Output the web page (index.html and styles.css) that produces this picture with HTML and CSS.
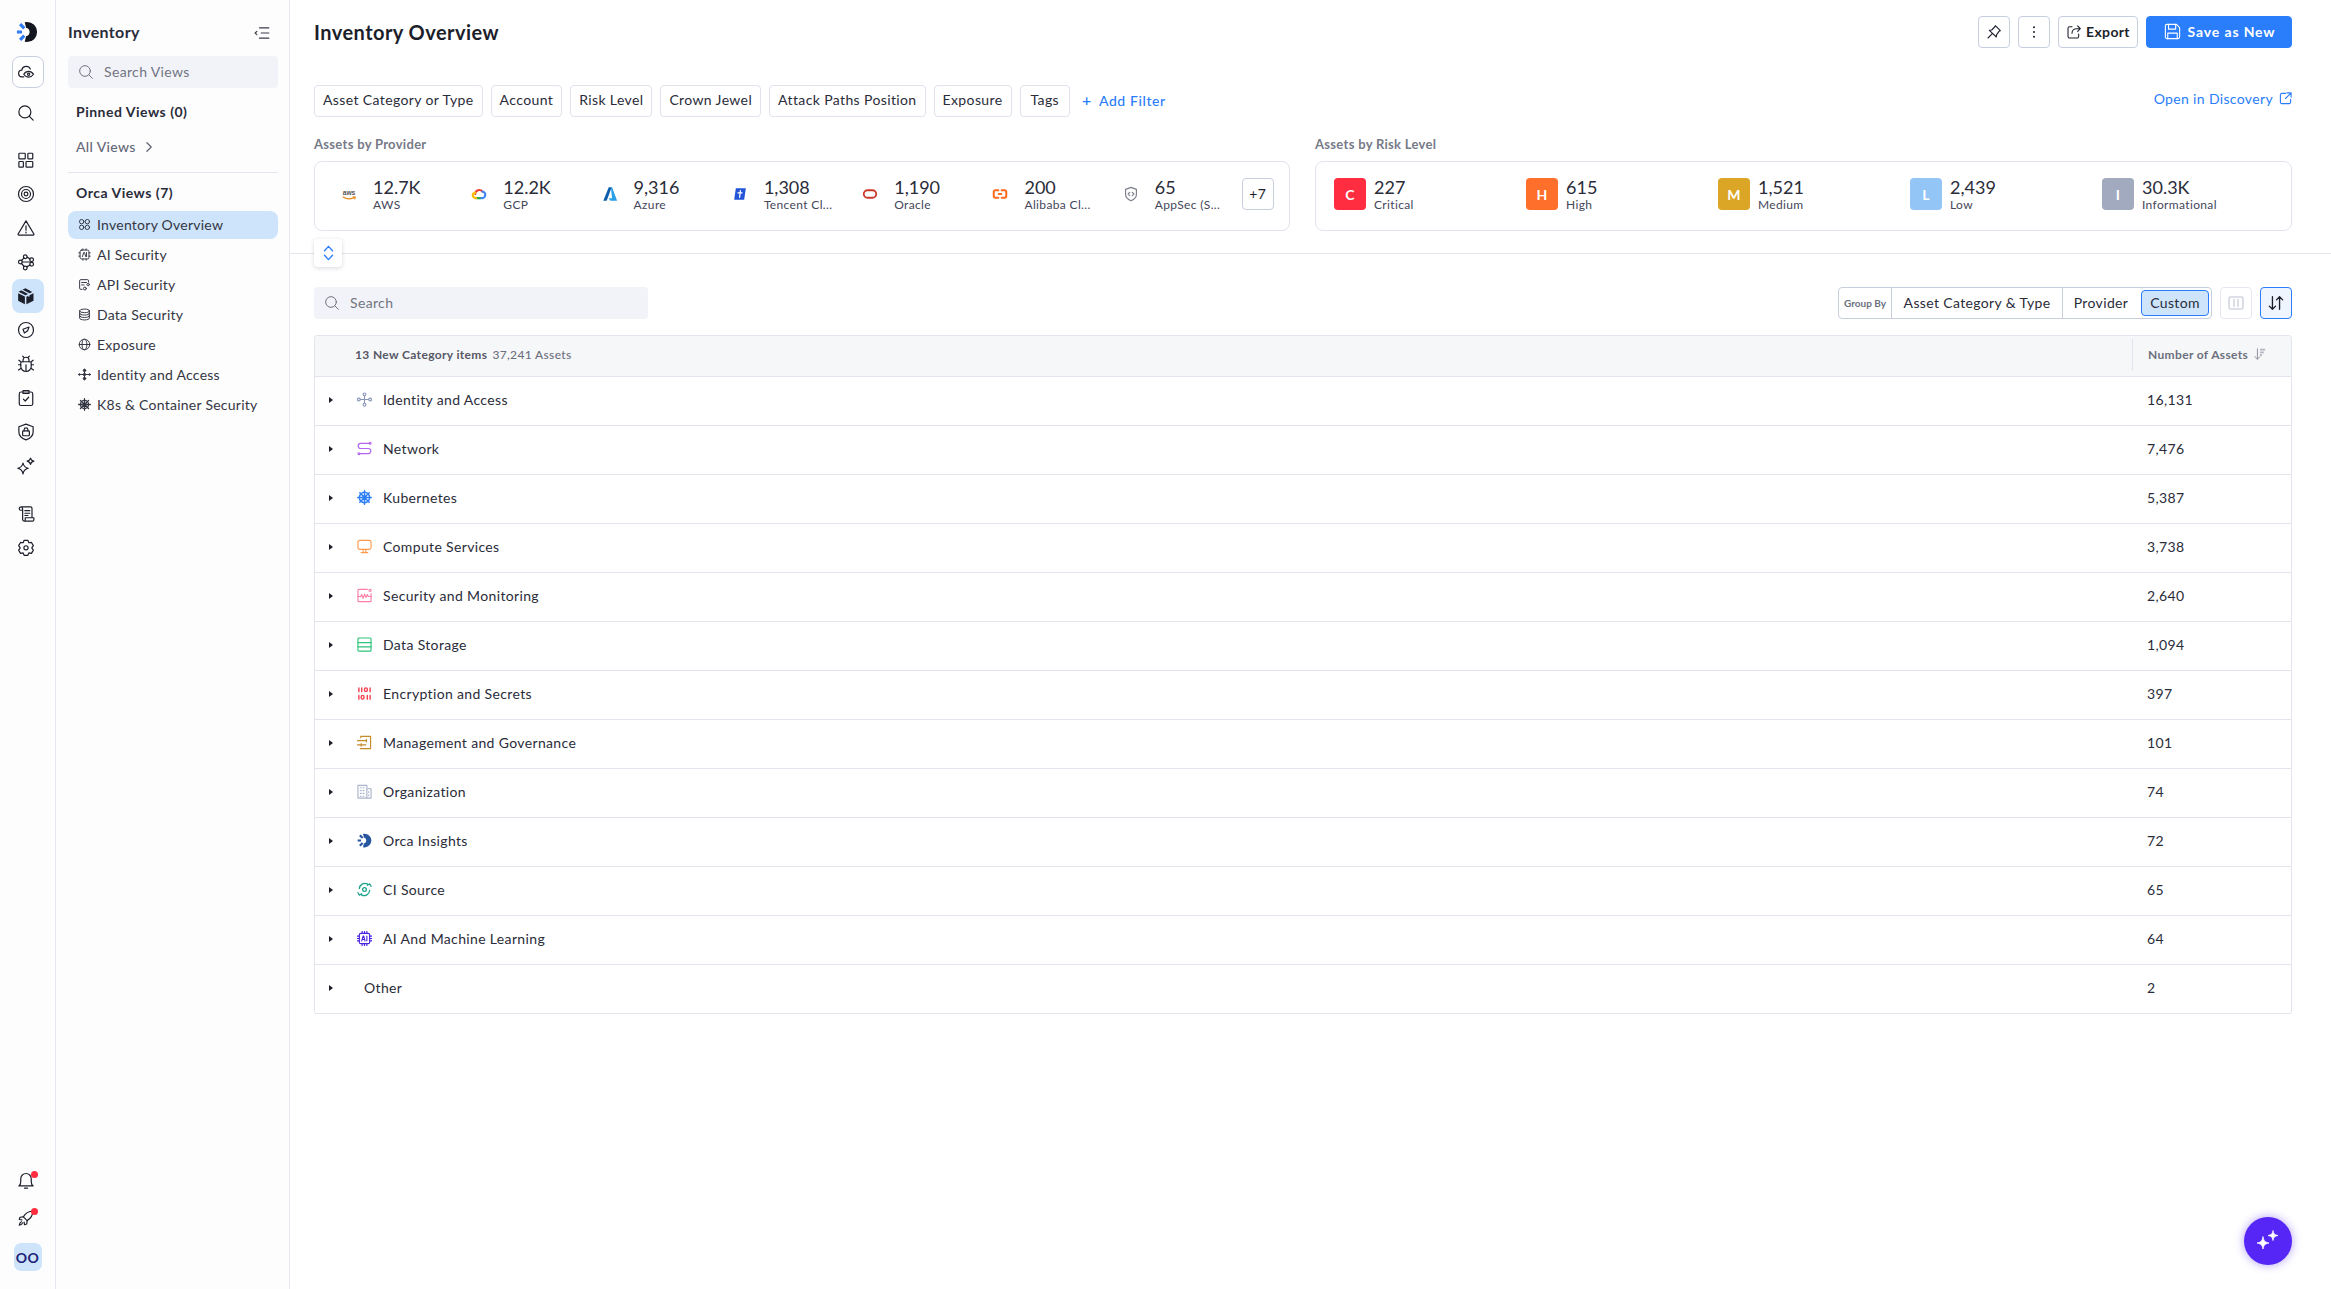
FILE: index.html
```html
<!DOCTYPE html>
<html lang="en">
<head>
    <meta charset="UTF-8">
    <meta name="viewport" content="width=device-width, initial-scale=1.0">
    <title>Inventory Overview</title>
    <link rel="stylesheet" href="styles.css">
</head>
<body>
    <!-- icon rail -->
    <nav class="rail">
        <svg class="logo" viewBox="0 0 24 24"><path class="logo-dark" d="M12 1a11 11 0 0 1 0 22l-2.500-.3 1.500-6a4.800 4.800 0 0 0 0-9.400L9.500 1.300z"/><path class="logo-blue" d="M4.500 3.500 9 8M1 12h5.500M4.500 20.500 9 16"/></svg>
        <a class="rail-btn rail-btn-outline"><svg class="ri" viewBox="0 0 24 24"><path d="M9 18.500H7a4.500 4.500 0 0 1-.6-9 6 6 0 0 1 11.400-1.500"/><path d="M9 15s2.500-3.800 6.500-3.800S22 15 22 15s-2.500 3.800-6.500 3.800S9 15 9 15z"/><circle cx="15.500" cy="15" r="1.500"/></svg></a>
        <a class="rail-btn rail-search"><svg class="ri" viewBox="0 0 24 24"><circle cx="10.500" cy="10.500" r="8"/><path d="m16.500 16.500 5 5"/></svg></a>

        <div class="rail-group">
            <a class="rail-btn"><svg class="ri" viewBox="0 0 24 24"><rect x="2.500" y="3" width="8.500" height="7.500" rx="1"/><rect x="14.500" y="3" width="6.500" height="7.500" rx="1"/><rect x="2.500" y="14" width="6" height="7.500" rx="1"/><rect x="12" y="14" width="9" height="7.500" rx="1"/></svg></a>
            <a class="rail-btn"><svg class="ri" viewBox="0 0 24 24"><circle cx="12" cy="12" r="10"/><circle cx="12" cy="12" r="6"/><circle cx="12" cy="12" r="2.500"/></svg></a>
            <a class="rail-btn"><svg class="ri" viewBox="0 0 24 24"><path d="M12 2.500 22.500 20a1 1 0 0 1-.9 1.500H2.400a1 1 0 0 1-.9-1.500z"/><path d="M12 9v6M12 17.500v1"/></svg></a>
            <a class="rail-btn"><svg class="ri" viewBox="0 0 24 24"><circle cx="4.500" cy="12" r="2.500"/><circle cx="11" cy="5" r="2.500"/><circle cx="19.500" cy="9" r="2.500"/><circle cx="19.500" cy="15" r="2.500"/><circle cx="11" cy="20" r="2.500"/><path d="M7 12h10M13.500 5.500 17.500 8M13 18.500l4.500-2.500M6 10l3.500-3.500M6 14l3.500 4"/></svg></a>
            <a class="rail-btn rail-btn-active"><svg class="ri" viewBox="0 0 24 24"><path class="solid" d="M11.300 1.700 2 6.300l9.300 4.700 9-4.500zM1.500 8.200l9 4.600V23l-9-4.700zM22 8.200l-9.500 4.700V23l9.500-4.800z"/><path class="cut" d="m6.500 4 9.300 4.800v3.400"/></svg></a>
            <a class="rail-btn"><svg class="ri" viewBox="0 0 24 24"><circle cx="12" cy="12" r="10"/><path d="m16 8-1.800 5-4.300 3L8 11z"/></svg></a>
            <a class="rail-btn"><svg class="ri" viewBox="0 0 24 24"><path d="M7 9h10a2 2 0 0 1 2 2v4a7 7 0 0 1-14 0v-4a2 2 0 0 1 2-2z"/><path d="M8 9V7a4 4 0 0 1 8 0v2M12 13v9M5 13H2M19 13h3M5 18l-3 2M19 18l3 2M5 9 2.500 7M19 9l2.500-2M9 3 7.500 1.500M15 3l1.500-1.500"/></svg></a>
            <a class="rail-btn"><svg class="ri" viewBox="0 0 24 24"><rect x="3" y="4" width="18" height="18" rx="2.500"/><path d="M8 2h8v4H8zM8.500 13.500l2.500 2.500 4.500-5"/></svg></a>
            <a class="rail-btn"><svg class="ri" viewBox="0 0 24 24"><path d="M12 1.500 21.500 5v7c0 5-4 8.500-9.500 10.500C6.500 20.500 2.500 17 2.500 12V5z"/><rect x="7.500" y="10.500" width="9" height="6.500" rx="1"/><path d="M9.500 10.500V9a2.500 2.500 0 0 1 5 0v1.500"/></svg></a>
            <a class="rail-btn"><svg class="ri" viewBox="0 0 24 24"><path d="M8 8c.8 4 2.500 6 7 7-4.500 1-6.200 3-7 7.500C7.200 18 5.500 16 1 15c4.500-1 6.200-3 7-7zM18 1.500c.5 2.500 1.500 3.500 4.500 4-3 .6-4 1.600-4.500 4.500-.5-2.900-1.500-3.900-4.500-4.500 3-.5 4-1.500 4.500-4z"/></svg></a>
        </div>

        <div class="rail-group rail-group-low">
            <a class="rail-btn"><svg class="ri" viewBox="0 0 24 24"><path d="M6 2.500h12a2 2 0 0 1 2 2V17M6 2.500a2.500 2.500 0 0 0-3 2.500c0 1.300.8 2 2 2h1.500M6 2.500c1 .5 1.500 1.500 1.500 3V19a2.500 2.500 0 0 0 2.500 2.500h10.500a2 2 0 0 0 2-2V17H11v2a2.500 2.500 0 0 1-1 2.500"/><path d="M10.500 7.500h6.500M10.500 11h6.500M10.500 14h4"/></svg></a>
            <a class="rail-btn"><svg class="ri" viewBox="0 0 24 24"><path d="m9.500 1.800 5 0 1.300 3.200 3.500-.4 2.500 4.300-2.100 2.900 2.100 3-2.500 4.300-3.500-.5-1.300 3.100h-5l-1.300-3.100-3.500.5-2.500-4.300 2.100-3-2.100-2.900 2.500-4.300 3.500.4z"/><circle cx="12" cy="11.800" r="2.800"/></svg></a>
        </div>

        <div class="rail-bottom">
            <a class="rail-btn"><svg class="ri" viewBox="0 0 24 24"><path d="M2.500 18.500c1.500-1 2.500-3 2.500-6V9a7 7 0 0 1 14 0v3.500c0 3 1 5 2.500 6z"/><path d="M10 21.500h4"/></svg><i class="dot"></i></a>
            <a class="rail-btn"><svg class="ri" viewBox="0 0 24 24"><path d="M21 3c-6 0-10 3-12.500 7.500l5 5C18 13 21 9 21 3z"/><path d="M8.500 10.500 4 11l-1 3 3.500.5M13.500 15.500 13 20l-3 1-.5-3.500M6 17c-1.500.5-2.500 2-3 4.500 2.500-.5 4-1.500 4.500-3"/></svg><i class="dot"></i></a>
            <a class="avatar">OO</a>
        </div>
    </nav>

    <!-- views panel -->
    <aside class="panel">
        <div class="panel-head">
            <span>Inventory</span>
            <svg class="collapse" viewBox="0 0 18 14"><path d="M6 1h11M8 7h9M6 13h11M3 5 1 7l2 2"/></svg>
        </div>
        <div class="search-box panel-search">
            <svg viewBox="0 0 24 24"><circle cx="10.500" cy="10.500" r="8"/><path d="m16.500 16.500 5 5"/></svg>
            <span>Search Views</span>
        </div>
        <h3 class="panel-title pinned">Pinned Views (0)</h3>
        <a class="all-views">All Views
            <svg viewBox="0 0 10 14"><path d="m2 2 5 5-5 5"/></svg>
        </a>
        <h3 class="panel-title orca">Orca Views (7)</h3>
        <ul class="view-list">
            <li class="view-active"><svg viewBox="0 0 16 16"><circle cx="4.500" cy="4.500" r="2.700"/><circle cx="11.500" cy="4.500" r="2.700"/><circle cx="4.500" cy="11.500" r="2.700"/><circle cx="11.500" cy="11.500" r="2.700"/></svg>Inventory Overview</li>
            <li><svg viewBox="0 0 16 16"><rect x="2.500" y="2.500" width="11" height="11" rx="2"/><path d="M1 6h1.500M1 10h1.500M13.500 6H15M13.500 10H15M6 1v1.500M10 1v1.500M6 13.500V15M10 13.500V15M5.500 10.500 7 5.500h1l1.500 5M10.500 5.500v5"/></svg>AI Security</li>
            <li><svg viewBox="0 0 16 16"><path d="M5 14H3.500a1.500 1.500 0 0 1-1.500-1.500v-9A1.500 1.500 0 0 1 3.500 2h8A1.500 1.500 0 0 1 13 3.500V5"/><path d="M4.500 5.500h6M4.500 8.500h3"/><circle cx="12.500" cy="8" r="1.500"/><circle cx="8.500" cy="13" r="1.800"/></svg>API Security</li>
            <li><svg viewBox="0 0 16 16"><ellipse cx="8" cy="3.500" rx="6" ry="2.200"/><path d="M2 3.500v9c0 1.200 2.700 2.200 6 2.200s6-1 6-2.200v-9M2 6.500c0 1.200 2.700 2.200 6 2.200s6-1 6-2.200M2 9.500c0 1.200 2.700 2.200 6 2.200s6-1 6-2.200"/></svg>Data Security</li>
            <li><svg viewBox="0 0 16 16"><circle cx="8" cy="8" r="6.500"/><ellipse cx="8" cy="8" rx="3" ry="6.500"/><path d="M1.500 8h13"/></svg>Exposure</li>
            <li><svg viewBox="0 0 16 16"><path d="M8 1.500v13M1 8h14"/><circle class="solid" cx="8" cy="3" r="1.500"/><circle class="solid" cx="8" cy="13" r="1.500"/><circle class="solid" cx="8" cy="8" r="1.500"/><circle class="solid" cx="1.800" cy="8" r="1"/><circle class="solid" cx="14.200" cy="8" r="1"/></svg>Identity and Access</li>
            <li><svg class="wheel" viewBox="0 0 16 16"><circle cx="8" cy="8" r="5"/><circle class="solid" cx="8" cy="8" r="1.500"/><path d="M8 .8v14.400M.8 8h14.400M3 3l10 10M13 3 3 13"/></svg>K8s &amp; Container Security</li>
        </ul>
    </aside>

    <main class="main">
        <section class="top">
            <header class="page-head">
                <h1>Inventory Overview</h1>
                <div class="head-actions">
                    <button class="btn btn-square"><svg viewBox="0 0 24 24"><path d="M14 2.500 21.500 10l-2 1-3.500 5-.5 3.500L5 9.500l3.500-.5 4.500-4.500zM9.500 14.500 3 21"/></svg></button>
                    <button class="btn btn-square"><svg viewBox="0 0 24 24"><circle class="solid" cx="12" cy="5" r="1.500"/><circle class="solid" cx="12" cy="12" r="1.500"/><circle class="solid" cx="12" cy="19" r="1.500"/></svg></button>
                    <button class="btn btn-export"><svg viewBox="0 0 24 24"><path d="M9 4H5.500A2.500 2.500 0 0 0 3 6.500v12A2.500 2.500 0 0 0 5.500 21h11a2.500 2.500 0 0 0 2.500-2.500V15"/><path d="M9 14c0-4 3-7 7-7h5M17.500 3 21.500 7l-4 4"/></svg>Export</button>
                    <button class="btn btn-save"><svg viewBox="0 0 24 24"><path d="M3 5a2 2 0 0 1 2-2h12l4 4v12a2 2 0 0 1-2 2H5a2 2 0 0 1-2-2z"/><path d="M7 3v6h9V3M6 21v-7h12v7"/></svg>Save as New</button>
                </div>
            </header>

            <div class="filters">
                <button class="chip">Asset Category or Type</button>
                <button class="chip">Account</button>
                <button class="chip">Risk Level</button>
                <button class="chip">Crown Jewel</button>
                <button class="chip">Attack Paths Position</button>
                <button class="chip">Exposure</button>
                <button class="chip chip-tags">Tags</button>
                <a class="add-filter"><span class="plus">+</span>Add Filter</a>
                <a class="discovery">Open in Discovery
                    <svg viewBox="0 0 14 14"><path d="M7 1.500H3A1.500 1.500 0 0 0 1.500 3v8A1.500 1.500 0 0 0 3 12.500h8a1.500 1.500 0 0 0 1.500-1.500V8M8.500 1h4.500v4.500M13 1 7 7"/></svg>
                </a>
            </div>

            <div class="summary">
                <div>
                    <div class="summary-label">Assets by Provider</div>
                    <div class="card card-provider">
                        <div class="stat">
                            <svg class="stat-icon" viewBox="0 0 24 24"><path fill="none" stroke="#e8891c" stroke-width="1.400" stroke-linecap="round" d="M5 15.500c4 3 10 3 14 .5M17 15.500l2.500.2-.5 2.300"/><text x="12" y="13" text-anchor="middle" class="aws-mark">aws</text></svg>
                            <div class="stat-text"><b>12.7K</b><span>AWS</span></div>
                        </div>
                        <div class="stat">
                            <svg class="stat-icon" viewBox="0 0 24 24"><path fill="none" stroke="#ea4335" stroke-width="2.600" d="M7.500 12a4.800 4.800 0 0 1 8.500-3"/><path fill="none" stroke="#4285f4" stroke-width="2.600" d="M16 9c2 .3 3.500 2 3.500 4S18 17 16 17h-3"/><path fill="none" stroke="#34a853" stroke-width="2.600" d="M13 17H8.500"/><path fill="none" stroke="#fbbc05" stroke-width="2.600" d="M8.500 17c-2 0-4-1.500-4-3.500s1.500-2.800 3-3"/></svg>
                            <div class="stat-text"><b>12.2K</b><span>GCP</span></div>
                        </div>
                        <div class="stat">
                            <svg class="stat-icon" viewBox="0 0 24 24"><path fill="#0b5cab" d="M10.500 4H14L8 20H4z"/><path fill="#2aa0e6" d="M13 4h1.500L20.500 20h-8l-2-3h4z"/></svg>
                            <div class="stat-text"><b>9,316</b><span>Azure</span></div>
                        </div>
                        <div class="stat">
                            <svg class="stat-icon" viewBox="0 0 24 24"><path fill="#2254d8" d="M7 5h12l-2 14H5z"/><path fill="none" stroke="#fff" stroke-width="1.500" d="M12.500 8 11.500 16M9.500 10.500h5"/></svg>
                            <div class="stat-text"><b>1,308</b><span>Tencent Cl...</span></div>
                        </div>
                        <div class="stat">
                            <svg class="stat-icon" viewBox="0 0 24 24"><rect x="4.500" y="7.500" width="15" height="9" rx="4.500" fill="none" stroke="#c9392b" stroke-width="2.200"/></svg>
                            <div class="stat-text"><b>1,190</b><span>Oracle</span></div>
                        </div>
                        <div class="stat">
                            <svg class="stat-icon" viewBox="0 0 24 24"><path fill="none" stroke="#ff6a1f" stroke-width="2.400" d="M10 7.500H6.500a2 2 0 0 0-2 2v5a2 2 0 0 0 2 2H10M14 7.500h3.500a2 2 0 0 1 2 2v5a2 2 0 0 1-2 2H14M10.500 12h3"/></svg>
                            <div class="stat-text"><b>200</b><span>Alibaba Cl...</span></div>
                        </div>
                        <div class="stat">
                            <svg class="stat-icon" viewBox="0 0 24 24"><path fill="none" stroke="#7c7f8c" stroke-width="1.400" d="M12 4 18.500 6.500v6c0 3.500-3 6-6.500 7.500-3.500-1.500-6.500-4-6.500-7.500v-6zM10.500 10 8.500 12l2 2M13.500 10l2 2-2 2"/></svg>
                            <div class="stat-text"><b>65</b><span>AppSec (S...</span></div>
                        </div>
                        <button class="btn btn-more">+7</button>
                    </div>
                </div>
                <div>
                    <div class="summary-label">Assets by Risk Level</div>
                    <div class="card card-risk">
                        <div class="stat"><i class="badge badge-c">C</i><div class="stat-text"><b>227</b><span>Critical</span></div></div>
                        <div class="stat"><i class="badge badge-h">H</i><div class="stat-text"><b>615</b><span>High</span></div></div>
                        <div class="stat"><i class="badge badge-m">M</i><div class="stat-text"><b>1,521</b><span>Medium</span></div></div>
                        <div class="stat"><i class="badge badge-l">L</i><div class="stat-text"><b>2,439</b><span>Low</span></div></div>
                        <div class="stat"><i class="badge badge-i">I</i><div class="stat-text"><b>30.3K</b><span>Informational</span></div></div>
                    </div>
                </div>
            </div>

            <button class="toggle"><svg viewBox="0 0 12 18"><path d="m1.500 6.500 4.500-5 4.500 5M1.500 11.500l4.500 5 4.500-5"/></svg></button>
        </section>

        <div class="toolbar">
            <div class="search-box table-search">
                <svg viewBox="0 0 24 24"><circle cx="10.500" cy="10.500" r="8"/><path d="m16.500 16.500 5 5"/></svg>
                <span>Search</span>
            </div>
            <div class="group-by">
                <span class="group-label">Group By</span>
                <span class="group-opt group-first">Asset Category &amp; Type</span>
                <span class="group-opt">Provider</span>
                <span class="group-opt group-on">Custom</span>
            </div>
            <button class="btn btn-columns"><svg viewBox="0 0 16 14"><rect x="1" y="1" width="14" height="12" rx="1.500"/><path d="M6 3.500v7M10 3.500v7"/></svg></button>
            <button class="btn btn-sort"><svg viewBox="0 0 20 18"><path d="M6 2v14M2.500 12.500 6 16l3.500-3.500M14 16V2M10.500 5.500 14 2l3.500 3.500"/></svg></button>
        </div>

        <div class="table">
            <div class="row row-head">
                <div class="cell-name"><b>13 New Category items</b> 37,241 Assets</div>
                <div class="cell-count">Number of Assets
                    <svg viewBox="0 0 14 14"><path d="M4 1v12M1 10l3 3 3-3"/><path class="thick" d="M7 2h6M7 5h4.500M7 8h2.500"/></svg>
                </div>
            </div>
            <div class="row">
                <div class="cell-name"><i class="caret"></i><svg class="row-icon c-iam" viewBox="0 0 16 16"><circle cx="8" cy="2.500" r="1.500"/><circle cx="8" cy="13.500" r="1.500"/><circle cx="2" cy="8" r="1.500"/><circle cx="14" cy="8" r="1.500"/><path d="M8 4v8M3.500 8h9"/></svg>Identity and Access</div>
                <div class="cell-count">16,131</div>
            </div>
            <div class="row">
                <div class="cell-name"><i class="caret"></i><svg class="row-icon c-net" viewBox="0 0 16 16"><path d="M13 2.500H4a2.750 2.750 0 0 0 0 5.500h8a2.750 2.750 0 0 1 0 5.500H3M5 8h6"/><circle cx="14" cy="2.500" r="1"/><circle cx="2" cy="13.500" r="1"/></svg>Network</div>
                <div class="cell-count">7,476</div>
            </div>
            <div class="row">
                <div class="cell-name"><i class="caret"></i><svg class="row-icon c-k8s" viewBox="0 0 16 16"><circle cx="8" cy="8" r="5.500"/><circle cx="8" cy="8" r="1.500"/><path d="M8 .8v14.400M.8 8h14.400M3 3l10 10M13 3 3 13"/></svg>Kubernetes</div>
                <div class="cell-count">5,387</div>
            </div>
            <div class="row">
                <div class="cell-name"><i class="caret"></i><svg class="row-icon c-compute" viewBox="0 0 16 16"><rect x="1" y="1.500" width="14" height="9.500" rx="2"/><path d="M6.500 11v3M9.500 11v3M4.500 14.500h7"/></svg>Compute Services</div>
                <div class="cell-count">3,738</div>
            </div>
            <div class="row">
                <div class="cell-name"><i class="caret"></i><svg class="row-icon c-sec" viewBox="0 0 16 16"><path d="M11 1.500H2a1 1 0 0 0-1 1v11a1 1 0 0 0 1 1h12a1 1 0 0 0 1-1V6"/><path d="M1 9h3l1-2 1.500 4L8 6.500 9.500 10l1.500-3 1 2h3"/><circle cx="14" cy="2.500" r="1.200"/></svg>Security and Monitoring</div>
                <div class="cell-count">2,640</div>
            </div>
            <div class="row">
                <div class="cell-name"><i class="caret"></i><svg class="row-icon c-data" viewBox="0 0 16 16"><rect x="1" y="1" width="14" height="14" rx="1"/><path d="M1 6h14M1 10.500h14"/></svg>Data Storage</div>
                <div class="cell-count">1,094</div>
            </div>
            <div class="row">
                <div class="cell-name"><i class="caret"></i><svg class="row-icon c-enc" viewBox="0 0 16 16"><path d="M2 2v4M5 2v4M14 2v4M2 14v-4M11 10v4M14 10v4"/><rect x="8" y="2" width="3" height="4" rx="1.500"/><rect x="4.500" y="10" width="3" height="4" rx="1.500"/></svg>Encryption and Secrets</div>
                <div class="cell-count">397</div>
            </div>
            <div class="row">
                <div class="cell-name"><i class="caret"></i><svg class="row-icon c-mgmt" viewBox="0 0 16 16"><path d="M4 3V1.500h10.500v13H3.500M.5 6h9M.5 10.500h9M10 4.500V7.500M4.500 9v3"/></svg>Management and Governance</div>
                <div class="cell-count">101</div>
            </div>
            <div class="row">
                <div class="cell-name"><i class="caret"></i><svg class="row-icon c-org" viewBox="0 0 16 16"><path d="M1 15V1.500h9.500V15zM10.500 5H15v10h-4.500M3.500 4h1M6.500 4h1M3.500 7h1M6.500 7h1M3.500 10h1M6.500 10h1M3.500 13h1M6.500 13h1M12.500 8v1M12.500 11.500v1"/></svg>Organization</div>
                <div class="cell-count">74</div>
            </div>
            <div class="row">
                <div class="cell-name"><i class="caret"></i><svg class="row-icon c-orca" viewBox="0 0 24 24"><path d="M12 1a11 11 0 0 1 0 22l-2.500-.3 1.500-6a4.800 4.800 0 0 0 0-9.400L9.500 1.300z"/><path class="orca-dash" d="M4.500 3.500 9 8M1 12h5.500M4.500 20.500 9 16"/></svg>Orca Insights</div>
                <div class="cell-count">72</div>
            </div>
            <div class="row">
                <div class="cell-name"><i class="caret"></i><svg class="row-icon c-ci" viewBox="0 0 16 16"><path d="M2.500 7A6 6 0 0 1 11 2M13.500 9A6 6 0 0 1 5 14M1 11.500l1.500 2.500 2.500-1.500M15 4.500 13.500 2 11 3.500"/><circle cx="8" cy="8" r="2"/></svg>CI Source</div>
                <div class="cell-count">65</div>
            </div>
            <div class="row">
                <div class="cell-name"><i class="caret"></i><svg class="row-icon c-ai" viewBox="0 0 16 16"><rect x="2.500" y="2.500" width="11" height="11" rx="1.500"/><path d="M0 5.500h2.500M0 8h2.500M0 10.500h2.500M13.500 5.500H16M13.500 8H16M13.500 10.500H16M5.500 0v2.500M8 0v2.500M10.500 0v2.500M5.500 13.500V16M8 13.500V16M10.500 13.500V16M5 10.500 6.500 5.500h.7l1.300 5M5.600 9h2.400M10.500 5.500v5"/></svg>AI And Machine Learning</div>
                <div class="cell-count">64</div>
            </div>
            <div class="row">
                <div class="cell-name"><i class="caret"></i><span class="other">Other</span></div>
                <div class="cell-count">2</div>
            </div>
        </div>
    </main>

    <button class="assistant"><svg viewBox="0 0 32 32"><path d="M11 12c.8 4 2 5.200 6 6-4 .8-5.200 2-6 6-.8-4-2-5.200-6-6 4-.8 5.200-2 6-6z"/><path d="M21 6c.6 3 1.500 3.900 5 4.500-3.500.6-4.400 1.500-5 5-.6-3.500-1.500-4.400-5-5 3.500-.6 4.400-1.500 5-4.500z"/></svg></button>
</body>
</html>
```

FILE: styles.css
```css
* {
    box-sizing: border-box;
}

body {
    margin: 0;
    height: 100vh;
    overflow: hidden;
    display: flex;
    font-family: "Lato", "Noto Sans", sans-serif;
    font-size: 14px;
    letter-spacing: 0.35px;
    color: #2a2c39;
    background: #fff;
}

svg {
    fill: none;
    stroke: currentColor;
    stroke-linecap: round;
    stroke-linejoin: round;
    flex: none;
}

button {
    font-family: inherit;
    letter-spacing: inherit;
    cursor: pointer;
}

/* icon rail */
.rail {
    width: 56px;
    flex: none;
    display: flex;
    flex-direction: column;
    align-items: center;
    padding-top: 21px;
    border-right: 1px solid #e6e7ef;
    background: #fdfdfe;
}

.logo {
    width: 22px;
    height: 22px;
    margin: 0 2px 13px 0;
}

.logo-dark {
    fill: #14161f;
    stroke: none;
}

.logo-blue {
    stroke: #2e7bf6;
    stroke-width: 3.4;
    stroke-linecap: butt;
}

.rail-btn {
    position: relative;
    width: 32px;
    height: 34px;
    padding-right: 4px;
    display: flex;
    align-items: center;
    justify-content: center;
    color: #1d1f2b;
    border-radius: 8px;
}

.ri {
    width: 18px;
    height: 18px;
    stroke-width: 1.6;
}

.rail-btn-outline {
    height: 32px;
    border: 1px solid #c9cedf;
    background: #fff;
}

.rail-search {
    margin-top: 8px;
}

.rail-group {
    margin-top: 13px;
    display: flex;
    flex-direction: column;
}

.rail-group-low {
    margin-top: 14px;
}

.rail-btn-active {
    background: #cde4fb;
}

.rail-btn-active .solid {
    fill: #1d1f2b;
    stroke: none;
}

.rail-btn-active .cut {
    stroke: #cde4fb;
}

.rail-bottom {
    margin-top: auto;
    padding-bottom: 18px;
    display: flex;
    flex-direction: column;
    align-items: center;
    gap: 3px;
}

.dot {
    position: absolute;
    top: 7px;
    right: 6px;
    width: 7px;
    height: 7px;
    border-radius: 50%;
    background: #ff2d3f;
}

.avatar {
    margin-top: 5px;
    width: 28px;
    height: 28px;
    border-radius: 7px;
    background: #cde4fb;
    color: #1d2277;
    font-size: 14px;
    font-weight: 700;
    letter-spacing: 0.5px;
    display: flex;
    align-items: center;
    justify-content: center;
}

/* views panel */
.panel {
    width: 234px;
    flex: none;
    padding: 0 11px 0 12px;
    border-right: 1px solid #e6e7ef;
    background: #fdfdfe;
}

.panel-head {
    height: 56px;
    padding: 6px 8px 0 0;
    display: flex;
    align-items: center;
    justify-content: space-between;
    font-size: 16px;
    font-weight: 700;
}

.collapse {
    width: 16px;
    height: 12px;
    margin-top: 4px;
    stroke: #3a3c48;
    stroke-width: 1.3;
}

.search-box {
    height: 32px;
    display: flex;
    align-items: center;
    gap: 10px;
    padding-left: 10px;
    border-radius: 4px;
    background: #f2f3f8;
    color: #717482;
}

.search-box span {
    margin-top: -2px;
}

.search-box svg {
    width: 16px;
    height: 16px;
    stroke-width: 1.5;
}

.panel-title {
    margin: 0;
    padding-left: 8px;
    font-size: 14px;
    font-weight: 700;
    line-height: 20px;
    letter-spacing: 0.5px;
}

.pinned {
    margin-top: 14px;
}

.all-views {
    display: flex;
    align-items: center;
    gap: 9px;
    padding: 15px 0 15px 8px;
    line-height: 20px;
    color: #666977;
    border-bottom: 1px solid #e4e5ee;
    font-weight: 500;
}

.all-views svg {
    width: 9px;
    height: 12px;
    stroke-width: 1.5;
}

.orca {
    margin-top: 10px;
}

.view-list {
    list-style: none;
    margin: 8px 0 0;
    padding: 0;
}

.view-list li {
    height: 28px;
    margin-bottom: 2px;
    padding: 0 0 1px 10px;
    display: flex;
    align-items: center;
    gap: 6px;
    color: #343643;
    border-radius: 8px;
    letter-spacing: 0.25px;
}

.view-list svg {
    width: 13px;
    height: 13px;
    stroke-width: 1.2;
}

.view-list .solid {
    fill: currentColor;
}

.view-list .wheel {
    stroke-width: 1.6;
}

.view-list .view-active {
    background: #cde4fb;
}

/* main */
.main {
    flex: 1;
    min-width: 0;
    position: relative;
}

.top {
    position: relative;
    height: 254px;
    padding: 16px 39px 0 24px;
    border-bottom: 1px solid #e4e5ee;
}

.page-head {
    height: 32px;
    display: flex;
    align-items: center;
    justify-content: space-between;
}

h1 {
    margin: -1px 0 0;
    font-size: 20px;
    font-weight: 700;
    letter-spacing: 0.45px;
    color: #1c1e2a;
}

.head-actions {
    display: flex;
    gap: 8px;
}

.btn {
    height: 32px;
    padding: 0 0 1px;
    display: inline-flex;
    align-items: center;
    justify-content: center;
    border: 1px solid #c9cedf;
    border-radius: 4px;
    background: #fff;
    color: #1d1f2b;
    font-size: 14px;
}

.btn svg {
    width: 16px;
    height: 16px;
    stroke-width: 1.6;
}

.btn-square {
    width: 32px;
}

.btn-square .solid {
    fill: currentColor;
    stroke: none;
}

.btn-export {
    width: 80px;
    gap: 4px;
    font-weight: 700;
}

.btn-save {
    width: 146px;
    gap: 6px;
    border-color: #2a7dfb;
    background: #2a7dfb;
    color: #fff;
    font-weight: 700;
    letter-spacing: 0.85px;
    padding-bottom: 2px;
}

.btn-save svg {
    width: 19px;
    height: 19px;
    stroke-width: 1.4;
}

.filters {
    margin-top: 37px;
    height: 32px;
    display: flex;
    align-items: center;
    gap: 8px;
}

.chip {
    height: 32px;
    padding: 0 8px 3px;
    border: 1px solid #e0e2ec;
    border-radius: 4px;
    background: #fff;
    color: #2a2c39;
    font-size: 14px;
    letter-spacing: 0.38px;
    white-space: nowrap;
}

.chip-tags {
    padding: 0 10px 3px;
}

.add-filter {
    margin: -4px 0 0 4px;
    color: #2a7dfb;
    font-weight: 500;
    letter-spacing: 0.6px;
    white-space: nowrap;
}

.plus {
    margin-right: 7px;
    font-size: 16px;
}

.discovery {
    margin: -6px 0 0 auto;
    display: flex;
    align-items: center;
    gap: 6px;
    color: #2a7dfb;
    white-space: nowrap;
}

.discovery svg {
    width: 13px;
    height: 13px;
    stroke-width: 1.2;
}

.summary {
    margin-top: 17px;
    display: grid;
    grid-template-columns: 976px 977px;
    gap: 25px;
}

.summary-label {
    height: 20px;
    margin-bottom: 7px;
    font-size: 13px;
    line-height: 20px;
    font-weight: 700;
    letter-spacing: 0.3px;
    color: #777a88;
}

.card {
    height: 70px;
    padding-top: 16px;
    border: 1px solid #e2e4ee;
    border-radius: 8px;
    display: grid;
    align-items: start;
}

.card-provider {
    padding-left: 24px;
    grid-template-columns: repeat(6, 130.3px) 121px 32px;
}

.card-risk {
    padding-left: 18px;
    grid-template-columns: repeat(5, 192px);
}

.stat {
    height: 32px;
    display: flex;
    align-items: center;
    gap: 14px;
    white-space: nowrap;
}

.card-risk .stat {
    gap: 8px;
}

.stat-icon {
    width: 20px;
    height: 20px;
    stroke: none;
}

.aws-mark {
    font-family: "Liberation Sans", sans-serif;
    font-size: 8px;
    font-weight: 700;
    fill: #555;
    stroke: none;
    letter-spacing: 0;
}

.stat-text {
    display: flex;
    flex-direction: column;
}

.stat-text b {
    font-size: 18px;
    font-weight: 400;
    line-height: 21px;
    letter-spacing: 0;
    color: #2a2c39;
}

.stat-text span {
    font-size: 12px;
    line-height: 14px;
    color: #44465a;
}

.btn-more {
    width: 32px;
    font-size: 14px;
}

.badge {
    width: 32px;
    height: 32px;
    border-radius: 4px;
    display: flex;
    align-items: center;
    justify-content: center;
    color: #fff;
    font-size: 14px;
    font-style: normal;
    font-weight: 700;
}

.badge-c { background: #ff2d3f; }
.badge-h { background: #ff6f2c; }
.badge-m { background: #dba626; }
.badge-l { background: #93c5f7; }
.badge-i { background: #a2aabf; }

.toggle {
    position: absolute;
    left: 24px;
    bottom: -14px;
    width: 28px;
    height: 28px;
    padding: 0;
    display: flex;
    align-items: center;
    justify-content: center;
    border: none;
    border-radius: 4px;
    background: #fff;
    box-shadow: 0 1px 4px rgba(40, 44, 80, 0.18);
    color: #2a7dfb;
}

.toggle svg {
    width: 11px;
    height: 16px;
    stroke-width: 1.5;
}

/* toolbar */
.toolbar {
    margin-top: 33px;
    padding: 0 39px 0 24px;
    display: flex;
    align-items: center;
    gap: 8px;
}

.table-search {
    width: 334px;
    margin-right: auto;
    padding-left: 10px;
}

.group-by {
    height: 32px;
    width: 374px;
    display: flex;
    align-items: center;
    border: 1px solid #c9cedf;
    border-radius: 4px;
}

.group-label {
    width: 53px;
    height: 100%;
    flex: none;
    display: flex;
    align-items: center;
    justify-content: center;
    border-right: 1px solid #c9cedf;
    font-size: 10px;
    font-weight: 700;
    letter-spacing: 0;
    color: #6c6f7d;
}

.group-opt {
    height: 100%;
    padding-bottom: 1px;
    display: flex;
    align-items: center;
    justify-content: center;
    white-space: nowrap;
}

.group-first {
    width: 171px;
    border-right: 1px solid #c9cedf;
}

.group-opt:nth-child(3) {
    width: 76px;
}

.group-on {
    width: 68px;
    height: 26px;
    margin-left: 2px;
    border: 1px solid #2a7dfb;
    border-radius: 4px;
    background: #cde4fb;
}

.btn-columns {
    width: 32px;
    border-color: #e6e7ef;
    color: #d3d6e2;
}

.btn-sort {
    width: 32px;
    border-color: #2a7dfb;
    background: #eef5fe;
}

.btn-sort svg {
    width: 18px;
    height: 16px;
    stroke-width: 1.5;
}

/* table */
.table {
    margin: 16px 39px 0 24px;
    border: 1px solid #e2e4ee;
    border-bottom: none;
    border-radius: 4px;
}

.row {
    height: 49px;
    padding-bottom: 3px;
    display: grid;
    grid-template-columns: 1fr 159px;
    align-items: center;
    border-bottom: 1px solid #e2e4ee;
}

.row-head {
    height: 41px;
    padding-bottom: 3px;
    background: #f6f7f9;
    border-radius: 4px 4px 0 0;
    font-size: 12px;
    font-weight: 500;
    color: #6c6f7d;
}

.row-head .cell-name {
    padding-left: 40px;
    gap: 5px;
}

.row-head b {
    color: #565866;
    font-weight: 700;
}

.row-head .cell-count {
    height: 32px;
    padding-bottom: 1px;
    border-left: 1px solid #e2e4ee;
    font-weight: 700;
    display: flex;
    align-items: center;
    gap: 6px;
}

.row-head svg {
    width: 12px;
    height: 12px;
    stroke: #8a8d9a;
    stroke-width: 1.1;
}

.row-head .thick {
    stroke: #b4b7c3;
    stroke-width: 2;
    stroke-linecap: butt;
}

.cell-name {
    padding-left: 14px;
    display: flex;
    align-items: center;
    white-space: nowrap;
}

.cell-count {
    padding-left: 15px;
}

.caret {
    width: 0;
    height: 0;
    margin-right: 24px;
    border-left: 4px solid #1c1e2a;
    border-top: 3.5px solid transparent;
    border-bottom: 3.5px solid transparent;
}

.row-icon {
    width: 15px;
    height: 15px;
    margin-right: 11px;
    stroke-width: 1.2;
}

.other {
    margin-left: 7px;
}

.c-iam { color: #8a97b8; }
.c-net { color: #b265f0; }
.c-k8s { color: #2f80f5; stroke-width: 1.6; }
.c-compute { color: #ff9a4d; }
.c-sec { color: #fb7fa5; }
.c-data { color: #2fc47a; }
.c-enc { color: #f5404f; stroke-width: 1.5; }
.c-mgmt { color: #c48a28; }
.c-org { color: #aab3cd; }
.c-orca { fill: #28569f; stroke: none; }
.c-orca .orca-dash { fill: none; stroke: #28569f; stroke-width: 3.4; stroke-linecap: butt; }
.c-ci { color: #1fa38c; stroke-width: 1.4; }
.c-ai { color: #4a22e0; }

/* floating assistant */
.assistant {
    position: fixed;
    right: 39px;
    bottom: 24px;
    width: 48px;
    height: 48px;
    padding: 0;
    border: none;
    border-radius: 50%;
    background: #5526f5;
    box-shadow: 0 0 10px rgba(85, 38, 245, 0.45);
    display: flex;
    align-items: center;
    justify-content: center;
}

.assistant svg {
    width: 32px;
    height: 32px;
    fill: #fff;
    stroke: #fff;
    stroke-width: 0.8;
}
```
